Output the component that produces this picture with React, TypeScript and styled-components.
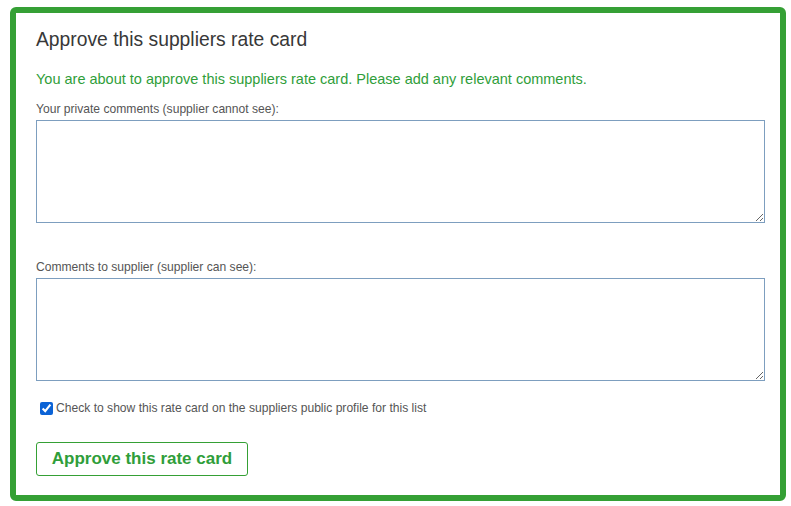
import styled, { createGlobalStyle } from "styled-components";

const GlobalStyle = createGlobalStyle`
  html, body {
    margin: 0;
    padding: 0;
    background: #ffffff;
  }
  body {
    font-family: "Liberation Sans", Arial, sans-serif;
  }
`;

const Page = styled.div`
  padding: 7px 0 0 10px;
`;

const Card = styled.form`
  box-sizing: border-box;
  width: 776px;
  height: 494px;
  border: 6px solid #35a035;
  border-radius: 6px;
  padding: 17px 20px 0 20px;
  display: flex;
  flex-direction: column;
`;

const Title = styled.h2`
  margin: 0;
  font-size: 19.3px;
  line-height: 20px;
  font-weight: normal;
  color: #383838;
`;

const Lead = styled.p`
  margin: 21px 0 0 0;
  font-size: 14.5px;
  line-height: 16px;
  color: #2f9e3a;
`;

const Label = styled.label<{ $top: number }>`
  display: block;
  margin-top: ${(p) => p.$top}px;
  font-size: 12.1px;
  line-height: 14px;
  color: #555555;
`;

const Comments = styled.textarea`
  box-sizing: border-box;
  display: block;
  margin-top: 4px;
  width: 729px;
  height: 103px;
  border: 1px solid #7d9ebf;
  border-radius: 0;
  padding: 4px;
  font-family: inherit;
  font-size: 12px;
  outline: none;
`;

const CheckRow = styled.label`
  display: flex;
  align-items: center;
  margin-top: 20px;
  font-size: 12.1px;
  line-height: 14px;
  color: #555555;
`;

const Check = styled.input`
  width: 13px;
  height: 13px;
  margin: 0 3px 0 4px;
  accent-color: #0b63d6;
`;

const ApproveBtn = styled.button`
  align-self: flex-start;
  margin-top: 27px;
  box-sizing: border-box;
  width: 212px;
  height: 34px;
  background: #ffffff;
  border: 1px solid #35a035;
  border-radius: 3px;
  color: #2f9e3a;
  font-family: inherit;
  font-size: 17px;
  font-weight: bold;
  cursor: pointer;
`;

export default function App() {
  return (
    <Page>
      <GlobalStyle />
      <Card onSubmit={(e) => e.preventDefault()}>
        <Title>Approve this suppliers rate card</Title>
        <Lead>
          You are about to approve this suppliers rate card. Please add any
          relevant comments.
        </Lead>
        <Label $top={15}>Your private comments (supplier cannot see):</Label>
        <Comments />
        <Label $top={37}>Comments to supplier (supplier can see):</Label>
        <Comments />
        <CheckRow>
          <Check type="checkbox" defaultChecked />
          Check to show this rate card on the suppliers public profile for this list
        </CheckRow>
        <ApproveBtn type="submit">Approve this rate card</ApproveBtn>
      </Card>
    </Page>
  );
}
